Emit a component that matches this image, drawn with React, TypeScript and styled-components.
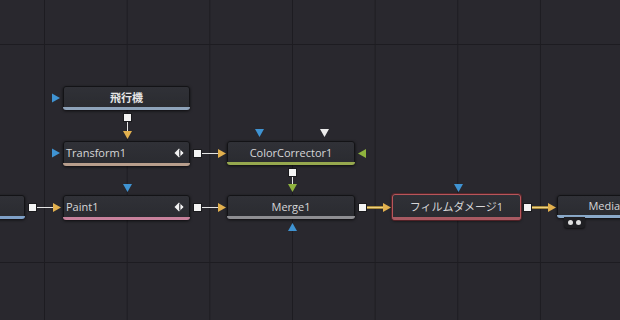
import React from "react";
import styled, { createGlobalStyle, css } from "styled-components";

const GlobalStyle = createGlobalStyle`
  html, body { margin: 0; padding: 0; background: #29282e; }
  body { overflow: hidden; font-family: "Open Sans", "Noto Sans", "Noto Sans CJK JP", sans-serif; }
`;

const Canvas = styled.div`
  position: relative;
  width: 620px;
  height: 320px;
  overflow: hidden;
  background-color: #29282e;
  background-image:
    linear-gradient(to right, #1d1c21 0, #1d1c21 1px, transparent 1px),
    linear-gradient(to bottom, #1d1c21 0, #1d1c21 1px, transparent 1px);
  background-size: 82.67px 100%, 100% 218px;
  background-position: 44px 0, 0 44px;
`;

type NodeProps = {
  $x: number;
  $y: number;
  $w: number;
  $h: number;
  $selected?: boolean;
};

const NodeBox = styled.div<NodeProps>`
  position: absolute;
  left: ${(p) => p.$x}px;
  top: ${(p) => p.$y}px;
  width: ${(p) => p.$w}px;
  height: ${(p) => p.$h}px;
  box-sizing: border-box;
  display: flex;
  flex-direction: column;
  border-radius: 3px;
  background: linear-gradient(#303137, #2a2b30);
  border: 1px solid #131316;
  box-shadow: 0 1px 3px rgba(0, 0, 0, 0.7);
  ${(p) =>
    p.$selected &&
    css`
      border: 1px solid #b8555a;
      box-shadow: 0 0 0 1px rgba(120, 40, 45, 0.6), 0 1px 3px rgba(0, 0, 0, 0.7);
    `}
`;

const NodeLabel = styled.div<{ $align: "left" | "center"; $bold?: boolean }>`
  flex: 1;
  display: flex;
  align-items: center;
  justify-content: ${(p) => (p.$align === "left" ? "flex-start" : "center")};
  padding: 0 4px 0 ${(p) => (p.$align === "left" ? "2px" : "4px")};
  color: ${(p) => (p.$bold ? "#e6e6e6" : "#d6d6d8")};
  font-size: 11px;
  font-weight: ${(p) => (p.$bold ? 700 : 400)};
  white-space: nowrap;
  overflow: hidden;
  line-height: 1;
`;

const LabelText = styled.span`
  flex: 0 1 auto;
`;

const Spacer = styled.span`
  flex: 1;
`;

const Band = styled.div<{ $color: string }>`
  height: 3px;
  margin: 0 -1px -1px;
  border-radius: 0 0 3px 3px;
  background: ${(p) => p.$color};
`;

const MediaTab = styled.div`
  position: absolute;
  top: 100%;
  left: 6px;
  width: 21px;
  height: 11px;
  display: flex;
  align-items: center;
  justify-content: center;
  gap: 3px;
  background: #1f1f23;
  border-radius: 0 0 3px 3px;
  box-shadow: 0 1px 2px rgba(0, 0, 0, 0.6);
`;

const Dot = styled.span`
  width: 5px;
  height: 5px;
  border-radius: 50%;
  background: #e0e0e0;
`;

const Wires = styled.svg`
  position: absolute;
  left: 0;
  top: 0;
  width: 620px;
  height: 320px;
  pointer-events: none;
  z-index: 2;
`;

const KeyIcon = () => (
  <svg width="11" height="10" viewBox="0 0 11 10">
    <polygon points="0.5,5 5,0.5 9.5,5 5,9.5" fill="#f2f2f2" />
    <rect x="5.2" y="1.5" width="1.4" height="7" fill="#2c2d32" />
    <polygon points="6.6,2.2 9.3,5 6.6,7.8" fill="#f2f2f2" />
  </svg>
);

type NodeDef = {
  label: string;
  x: number;
  y: number;
  w: number;
  h: number;
  band: string;
  align: "left" | "center";
  bold?: boolean;
  icon?: boolean;
  selected?: boolean;
  tab?: boolean;
};

const nodes: NodeDef[] = [
  { label: "飛行機", x: 63, y: 86, w: 127, h: 24, band: "#8ea3ba", align: "center", bold: true },
  { label: "Transform1", x: 63, y: 141, w: 127, h: 25, band: "#b89e8c", align: "left", icon: true },
  { label: "ColorCorrector1", x: 227, y: 141, w: 128, h: 24, band: "#96a84e", align: "center" },
  { label: "", x: -60, y: 195, w: 85, h: 24, band: "#7fa1c8", align: "center" },
  { label: "Paint1", x: 63, y: 195, w: 127, h: 25, band: "#c8829c", align: "left", icon: true },
  { label: "Merge1", x: 227, y: 195, w: 128, h: 24, band: "#8e8e92", align: "center" },
  { label: "フィルムダメージ1", x: 392, y: 194, w: 129, h: 26, band: "#a85a62", align: "center", selected: true },
  { label: "MediaOut1", x: 557, y: 195, w: 120, h: 23, band: "#8aa9c9", align: "center", tab: true },
];

const BLUE = "#3f93d2";
const YELLOW = "#e2b04e";
const GREEN = "#8fb33e";
const WHITE = "#ececec";

const triRight = (x: number, cy: number) => `${x},${cy - 4.5} ${x + 8},${cy} ${x},${cy + 4.5}`;
const triLeft = (x: number, cy: number) => `${x + 8},${cy - 4.5} ${x},${cy} ${x + 8},${cy + 4.5}`;
const triDown = (cx: number, y: number) => `${cx - 4.5},${y} ${cx + 4.5},${y} ${cx},${y + 8}`;
const triUp = (cx: number, y: number) => `${cx - 4.5},${y + 8} ${cx + 4.5},${y + 8} ${cx},${y}`;

const Square = ({ x, y }: { x: number; y: number }) => (
  <rect x={x + 0.5} y={y + 0.5} width={8} height={8} fill="#f4f4f4" stroke="#1a1a1d" strokeWidth={1} />
);

const Wire = ({ x1, y1, x2, y2 }: { x1: number; y1: number; x2: number; y2: number }) => (
  <line x1={x1} y1={y1} x2={x2} y2={y2} stroke="#e4e4e4" strokeWidth={1} />
);

const ThickWire = ({ x1, x2, y }: { x1: number; x2: number; y: number }) => (
  <g>
    <line x1={x1} y1={y} x2={x2} y2={y} stroke="#a88a3c" strokeWidth={3} />
    <line x1={x1} y1={y} x2={x2} y2={y} stroke="#f0d27e" strokeWidth={1} />
  </g>
);

export default function App() {
  return (
    <>
      <GlobalStyle />
      <Canvas>
        {nodes.map((n, i) => (
          <NodeBox key={i} $x={n.x} $y={n.y} $w={n.w} $h={n.h} $selected={n.selected}>
            <NodeLabel $align={n.align} $bold={n.bold}>
              <LabelText>{n.label}</LabelText>
              {n.icon && (
                <>
                  <Spacer />
                  <KeyIcon />
                </>
              )}
            </NodeLabel>
            <Band $color={n.band} />
            {n.tab && (
              <MediaTab>
                <Dot />
                <Dot />
              </MediaTab>
            )}
          </NodeBox>
        ))}
        <Wires viewBox="0 0 620 320">
          {/* 飛行機 */}
          <polygon points={triRight(52, 98)} fill={BLUE} />
          <Square x={123} y={113} />
          <Wire x1={127.5} y1={122} x2={127.5} y2={131} />
          <polygon points={triDown(127.5, 131)} fill={YELLOW} />

          {/* Transform1 */}
          <polygon points={triRight(52, 153)} fill={BLUE} />
          <Square x={193} y={149} />
          <Wire x1={202} y1={153.5} x2={218} y2={153.5} />
          <polygon points={triRight(218, 153.5)} fill={YELLOW} />

          {/* ColorCorrector1 */}
          <polygon points={triDown(259.5, 129)} fill={BLUE} />
          <polygon points={triDown(324.5, 129)} fill={WHITE} />
          <polygon points={triLeft(358, 153.5)} fill={GREEN} />
          <Square x={288} y={168} />
          <Wire x1={292.5} y1={177} x2={292.5} y2={185} />
          <polygon points={triDown(292.5, 184)} fill={GREEN} />

          {/* left clipped node */}
          <Square x={28} y={203} />
          <Wire x1={37} y1={207.5} x2={53} y2={207.5} />
          <polygon points={triRight(53, 207.5)} fill={YELLOW} />

          {/* Paint1 */}
          <polygon points={triDown(127.5, 184)} fill={BLUE} />
          <Square x={193} y={203} />
          <Wire x1={202} y1={207.5} x2={218} y2={207.5} />
          <polygon points={triRight(218, 207.5)} fill={YELLOW} />

          {/* Merge1 */}
          <polygon points={triUp(292.5, 223)} fill={BLUE} />
          <Square x={358} y={203} />
          <ThickWire x1={367} x2={384} y={207.5} />
          <polygon points={triRight(383, 207.5)} fill={YELLOW} />

          {/* フィルムダメージ1 */}
          <polygon points={triDown(458.5, 184)} fill={BLUE} />
          <Square x={523} y={203} />
          <ThickWire x1={532} x2={549} y={207.5} />
          <polygon points={triRight(548, 207.5)} fill={YELLOW} />
        </Wires>
      </Canvas>
    </>
  );
}
